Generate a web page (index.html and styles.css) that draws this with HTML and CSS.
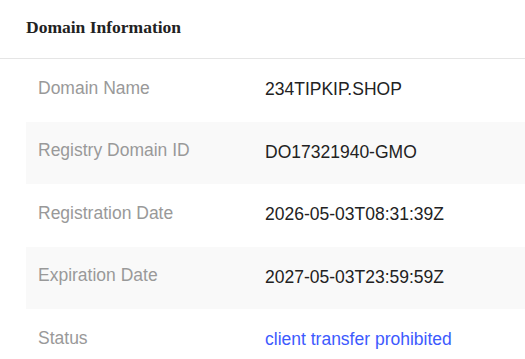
FILE: index.html
```html
<!DOCTYPE html>
<html lang="en">
<head>
    <meta charset="UTF-8">
    <title>Domain Information</title>
    <link rel="stylesheet" href="styles.css">
</head>
<body>
    <div class="panel">
        <div class="panel-header">
            <h3>Domain Information</h3>
        </div>
        <!-- whois rows -->
        <div class="info-list">
            <div class="info-row">
                <span class="label">Domain Name</span>
                <span class="value">234TIPKIP.SHOP</span>
            </div>
            <div class="info-row">
                <span class="label">Registry Domain ID</span>
                <span class="value">DO17321940-GMO</span>
            </div>
            <div class="info-row">
                <span class="label">Registration Date</span>
                <span class="value">2026-05-03T08:31:39Z</span>
            </div>
            <div class="info-row">
                <span class="label">Expiration Date</span>
                <span class="value">2027-05-03T23:59:59Z</span>
            </div>
            <div class="info-row">
                <span class="label">Status</span>
                <span class="value"><a href="#">client transfer prohibited</a></span>
            </div>
        </div>
    </div>
</body>
</html>
```

FILE: styles.css
```css
body {
    margin: 0;
    padding: 0;
    background: #fff;
    font-family: "Liberation Sans", Arial, sans-serif;
    color: #333;
}
.panel {
    width: 100%;
}
.panel-header {
    height: 58px;
    border-bottom: 1px solid #e5e5e5;
    padding: 0 26px;
    display: flex;
    align-items: center;
}
.panel-header h3 {
    margin: 0 0 3px;
    font-family: "Liberation Serif", "Times New Roman", serif;
    font-size: 17.5px;
    font-weight: bold;
    color: #222;
}
.info-list {
    margin-left: 26px;
}
.info-row {
    display: flex;
    align-items: center;
    height: 62.5px;
}
.info-row:nth-child(even) {
    background-color: #f9f9f9;
}
.label {
    width: 227px;
    padding-left: 12px;
    padding-bottom: 4px;
    font-size: 17.5px;
    color: #999;
}
.value {
    font-size: 17.5px;
    color: #222;
    padding-bottom: 1px;
}
.value a {
    color: #3d5afe;
    text-decoration: none;
}
```
